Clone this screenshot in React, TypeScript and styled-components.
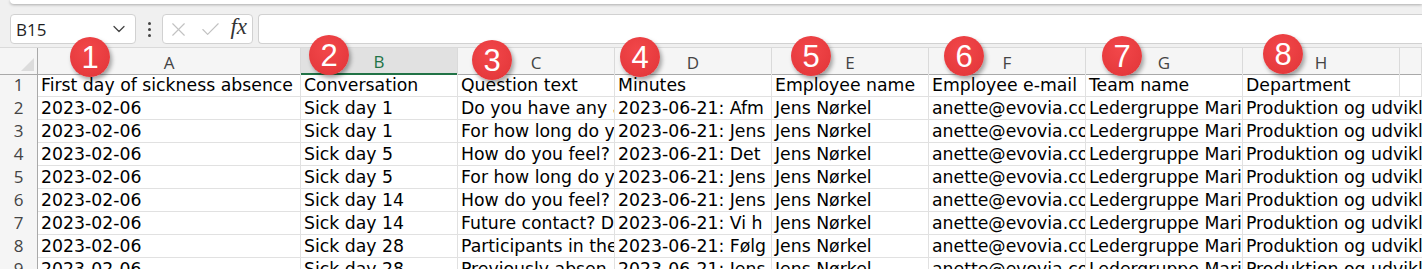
import { FC } from "react";
import styled, { createGlobalStyle } from "styled-components";
import { ChevronDown, X, Check } from "lucide-react";

const GlobalStyle = createGlobalStyle`
  html, body {
    margin: 0;
    padding: 0;
    background: #f0f0f0;
    overflow: hidden;
  }
`;

interface Fila {
  a: string;
  b: string;
  c: string;
  d: string;
  e: string;
  f: string;
  g: string;
  h: string;
}

const columnas = ["A", "B", "C", "D", "E", "F", "G", "H", ""];

const encabezado: Fila = {
  a: "First day of sickness absence",
  b: "Conversation",
  c: "Question text",
  d: "Minutes",
  e: "Employee name",
  f: "Employee e-mail",
  g: "Team name",
  h: "Department",
};

const base = {
  a: "2023-02-06",
  e: "Jens Nørkel",
  f: "anette@evovia.co",
  g: "Ledergruppe Maria",
  h: "Produktion og udvikl",
};

const filas: Fila[] = [
  { ...base, b: "Sick day 1", c: "Do you have any a", d: "2023-06-21: Afm" },
  { ...base, b: "Sick day 1", c: "For how long do y", d: "2023-06-21: Jens" },
  { ...base, b: "Sick day 5", c: "How do you feel?", d: "2023-06-21: Det" },
  { ...base, b: "Sick day 5", c: "For how long do y", d: "2023-06-21: Jens" },
  { ...base, b: "Sick day 14", c: "How do you feel?", d: "2023-06-21: Jens" },
  { ...base, b: "Sick day 14", c: "Future contact? D", d: "2023-06-21: Vi h" },
  { ...base, b: "Sick day 28", c: "Participants in the", d: "2023-06-21: Følg" },
  { ...base, b: "Sick day 28", c: "Previously absen", d: "2023-06-21: Jens" },
];

const marcas = [
  { n: 1, x: 90, y: 57 },
  { n: 2, x: 329, y: 55 },
  { n: 3, x: 492, y: 60 },
  { n: 4, x: 640, y: 57 },
  { n: 5, x: 811, y: 56 },
  { n: 6, x: 964, y: 56 },
  { n: 7, x: 1122, y: 56 },
  { n: 8, x: 1283, y: 54 },
];

const plantilla = "38px 263px repeat(7, 157px) 1fr";

const Pagina = styled.div`
  position: relative;
  width: 1422px;
  height: 269px;
  overflow: hidden;
  background: #f0f0f0;
`;

const Cinta = styled.div`
  height: 4px;
  margin-left: 10px;
  background: #ffffff;
  border-bottom-left-radius: 6px;
  box-shadow: 0 1px 3px rgba(0, 0, 0, 0.28);
`;

const BarraFormula = styled.div`
  display: flex;
  align-items: center;
  height: 30px;
  margin-top: 10px;
  padding-left: 10px;
`;

const Caja = styled.div`
  box-sizing: border-box;
  height: 30px;
  background: #ffffff;
  border: 1px solid #d1d1d1;
  border-radius: 4px;
  display: flex;
  align-items: center;
`;

const CajaNombre = styled(Caja)`
  width: 126px;
  padding: 0 6px 0 5px;
  justify-content: space-between;
  font-family: "Open Sans", "Noto Sans", sans-serif;
  font-size: 17px;
  color: #1f1f1f;
  svg {
    color: #444;
  }
`;

const Puntos = styled.div`
  width: 26px;
  display: flex;
  flex-direction: column;
  align-items: center;
  gap: 3px;
  span {
    width: 3px;
    height: 3px;
    border-radius: 50%;
    background: #444;
  }
`;

const CajaFx = styled(Caja)`
  width: 91px;
  padding: 0 5px 0 4px;
  justify-content: space-between;
  color: #c2c2c2;
  b {
    font-family: "Liberation Serif", serif;
    font-style: italic;
    font-weight: normal;
    font-size: 23px;
    color: #333;
    margin-top: -4px;
  }
`;

const CajaTexto = styled(Caja)`
  flex: 1;
  margin-left: 5px;
  border-right: none;
  border-radius: 4px 0 0 4px;
`;

const Hoja = styled.div`
  margin-top: 3px;
  border-top: 1px solid #dadada;
  background: #ffffff;
`;

const Fila = styled.div<{ $cabecera?: boolean }>`
  display: grid;
  grid-template-columns: ${plantilla};
  height: ${(p) => (p.$cabecera ? "25px" : "23px")};
  background: ${(p) => (p.$cabecera ? "#f5f5f5" : "#ffffff")};
`;

const Cabecera = styled.div<{ $sel?: boolean }>`
  box-sizing: border-box;
  display: flex;
  align-items: center;
  justify-content: center;
  padding-top: 2px;
  font-family: "Open Sans", "Noto Sans", sans-serif;
  font-size: 17px;
  color: ${(p) => (p.$sel ? "#217346" : "#444444")};
  background: ${(p) => (p.$sel ? "#e1e1e1" : "#f5f5f5")};
  border-right: 1px solid #dadada;
  border-bottom: ${(p) => (p.$sel ? "2px solid #217346" : "1px solid #a9a9a9")};
`;

const Esquina = styled(Cabecera)`
  position: relative;
  border-right: 1px solid #a9a9a9;
  &::after {
    content: "";
    position: absolute;
    right: 3px;
    bottom: 3px;
    width: 0;
    height: 0;
    border-left: 13px solid transparent;
    border-bottom: 13px solid #dcdcdc;
  }
`;

const NumeroFila = styled.div`
  box-sizing: border-box;
  display: flex;
  align-items: center;
  justify-content: center;
  font-family: "Open Sans", "Noto Sans", sans-serif;
  font-size: 17px;
  color: #444444;
  background: #f5f5f5;
  border-right: 1px solid #a9a9a9;
  border-bottom: 1px solid #dadada;
`;

const Celda = styled.div<{ $abierta?: boolean }>`
  box-sizing: border-box;
  display: flex;
  align-items: center;
  padding: 1px 0 0 3px;
  overflow: hidden;
  white-space: nowrap;
  font-family: "DejaVu Sans", Verdana, sans-serif;
  font-size: 17.3px;
  color: #000000;
  border-right: ${(p) => (p.$abierta ? "none" : "1px solid #e1e1e1")};
  border-bottom: 1px solid #e1e1e1;
  grid-column: ${(p) => (p.$abierta ? "span 2" : "auto")};
`;

const Marca = styled.div`
  position: absolute;
  width: 40px;
  height: 40px;
  margin: -20px 0 0 -20px;
  border-radius: 50%;
  background: radial-gradient(circle at 45% 35%, #f2474a 0%, #e63a3d 70%, #d83236 100%);
  box-shadow: 2px 3px 4px rgba(0, 0, 0, 0.35);
  display: flex;
  align-items: center;
  justify-content: center;
  font-family: "Liberation Sans", Arial, sans-serif;
  font-size: 31px;
  color: #ffffff;
  line-height: 1;
`;

const FilaDatos: FC<{ num: number; fila: Fila; ultima?: boolean }> = ({ num, fila, ultima }) => (
  <Fila>
    <NumeroFila>{num}</NumeroFila>
    <Celda>{fila.a}</Celda>
    <Celda>{fila.b}</Celda>
    <Celda>{fila.c}</Celda>
    <Celda>{fila.d}</Celda>
    <Celda>{fila.e}</Celda>
    <Celda>{fila.f}</Celda>
    <Celda>{fila.g}</Celda>
    {ultima ? (
      <>
        <Celda>{fila.h}</Celda>
        <Celda />
      </>
    ) : (
      <Celda $abierta>{fila.h}</Celda>
    )}
  </Fila>
);

export default function App() {
  return (
    <Pagina>
      <GlobalStyle />
      <Cinta />
      <BarraFormula>
        <CajaNombre>
          B15
          <ChevronDown size={20} strokeWidth={1.5} />
        </CajaNombre>
        <Puntos>
          <span />
          <span />
          <span />
        </Puntos>
        <CajaFx>
          <X size={23} strokeWidth={1.2} />
          <Check size={23} strokeWidth={1.2} />
          <b>fx</b>
        </CajaFx>
        <CajaTexto />
      </BarraFormula>
      <Hoja>
        <Fila $cabecera>
          <Esquina />
          {columnas.map((c, i) => (
            <Cabecera key={i} $sel={c === "B"}>
              {c}
            </Cabecera>
          ))}
        </Fila>
        <FilaDatos num={1} fila={encabezado} ultima />
        {filas.map((f, i) => (
          <FilaDatos key={i} num={i + 2} fila={f} />
        ))}
      </Hoja>
      {marcas.map((m) => (
        <Marca key={m.n} style={{ left: m.x, top: m.y }}>
          {m.n}
        </Marca>
      ))}
    </Pagina>
  );
}
